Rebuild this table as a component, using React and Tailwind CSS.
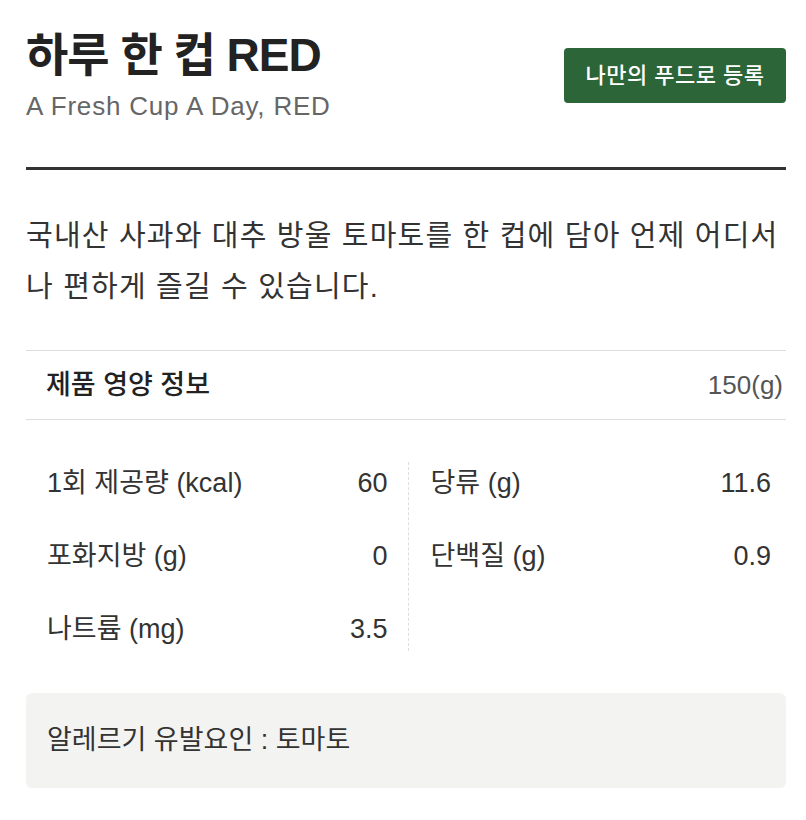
const FONT = { fontFamily: '"Liberation Sans", "Noto Sans CJK KR", sans-serif' };

const leftRows = [
  { label: '1회 제공량 (kcal)', value: '60' },
  { label: '포화지방 (g)', value: '0' },
  { label: '나트륨 (mg)', value: '3.5' },
];

const rightRows = [
  { label: '당류 (g)', value: '11.6' },
  { label: '단백질 (g)', value: '0.9' },
];

const NutriRow = ({ label, value }) => (
  <div className="flex h-[73px] items-center justify-between text-[27px] text-[#333]">
    <span>{label}</span>
    <span>{value}</span>
  </div>
);

export default function App() {
  return (
    <div className="bg-white pl-[26px] pr-[20px] pt-[27px] pb-[32px]" style={FONT}>
      <header className="flex items-start justify-between">
        <div>
          <h1 className="text-[46px] font-bold leading-[56px] tracking-[-1px] text-[#222]">하루 한 컵 RED</h1>
          <p className="mt-[6px] text-[26px] leading-[34px] tracking-[0.8px] text-[#666]">A Fresh Cup A Day, RED</p>
        </div>
        <button className="mt-[21px] h-[55px] w-[222px] rounded-[4px] bg-[#2c6537] text-[22px] font-medium tracking-[0.5px] text-white">
          나만의 푸드로 등록
        </button>
      </header>

      <div className="mt-[44px] h-[3px] bg-[#333]" />

      <p className="mt-[41px] text-[29px] leading-[51px] tracking-[1.2px] text-[#333]">
        국내산 사과와 대추 방울 토마토를 한 컵에 담아 언제 어디서 나 편하게 즐길 수 있습니다.
      </p>

      <section className="mt-[37px]">
        <div className="flex h-[70px] items-center justify-between border-y border-[#ddd] pl-[20px] pr-[3px]">
          <span className="text-[27px] font-medium text-[#222]">제품 영양 정보</span>
          <span className="text-[26px] text-[#555]">150(g)</span>
        </div>

        <div className="flex py-[27px]">
          <div className="flex-1 pl-[21px] pr-[20px]">
            {leftRows.map((r) => (
              <NutriRow key={r.label} {...r} />
            ))}
          </div>
          <div className="my-[15px] border-l border-dashed border-[#ddd]" />
          <div className="flex-1 pl-[22px] pr-[15px]">
            {rightRows.map((r) => (
              <NutriRow key={r.label} {...r} />
            ))}
          </div>
        </div>
      </section>

      <div className="flex h-[95px] items-center rounded-[6px] bg-[#f3f3f2] px-[21px]">
        <span className="text-[27px] text-[#333]">알레르기 유발요인 : 토마토</span>
      </div>
    </div>
  );
}
